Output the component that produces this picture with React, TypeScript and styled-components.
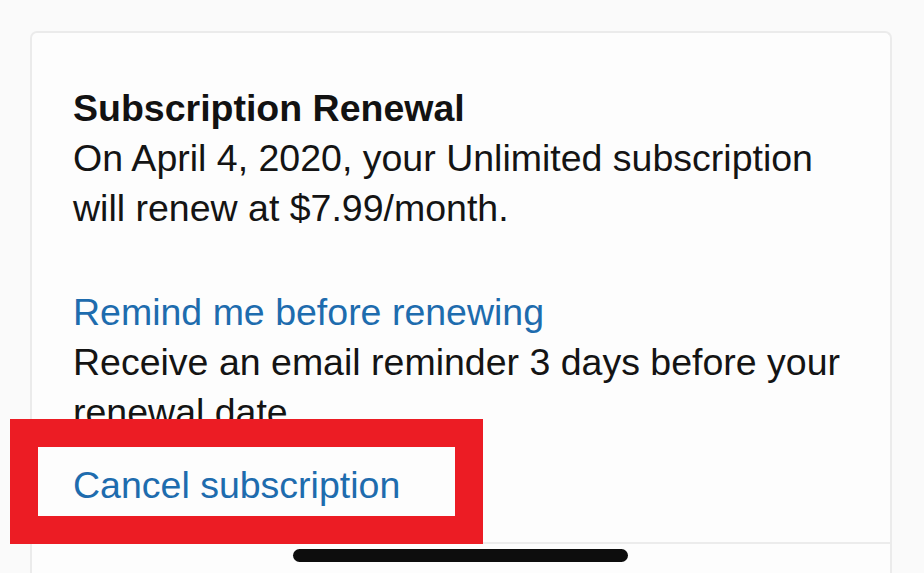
import * as React from 'react'
import styled, {createGlobalStyle} from 'styled-components'

const GlobalStyle = createGlobalStyle`
  html, body {
    margin: 0;
    padding: 0;
    background: #fafafa;
    overflow: hidden;
  }
  body {
    font-family: "Liberation Sans", Arial, Helvetica, sans-serif;
    color: #121212;
  }
`

const Page = styled.div`
  height: 573px;
  padding: 31px 32px 0 30px;
  box-sizing: border-box;
  overflow: hidden;
`

const Card = styled.div`
  background: #fdfdfd;
  border: 2px solid #ebebeb;
  border-bottom: none;
  border-radius: 7px 7px 0 0;
  height: 560px;
  box-sizing: border-box;
`

const Section = styled.div<{$top?: number; $bottom?: number}>`
  padding: ${p => p.$top ?? 0}px 38px ${p => p.$bottom ?? 0}px 41px;
  font-size: 37.5px;
  line-height: 50px;
  position: relative;
`

const Title = styled.div`
  font-weight: bold;
`

const Text = styled.div`
  color: #141414;
`

const Link = styled.a`
  display: block;
  color: #1e6cae;
  text-decoration: none;
`

const Divider = styled.div`
  border-top: 2px solid #ececec;
`

const Highlight = styled.div`
  position: absolute;
  left: -22px;
  top: -41px;
  width: 473px;
  height: 125px;
  box-sizing: border-box;
  border: 28px solid #ec1c24;
  background: transparent;
  pointer-events: none;
`

const HomeIndicator = styled.div`
  position: absolute;
  left: 293px;
  top: 549px;
  width: 335px;
  height: 13px;
  border-radius: 7px;
  background: #0d0d0d;
`

export default function App() {
  return (
    <React.Fragment>
      <GlobalStyle/>
      <Page>
        <Card>
          <Section $top={50} $bottom={54}>
            <Title>Subscription Renewal</Title>
            <Text>On April 4, 2020, your Unlimited subscription will renew at $7.99/month.</Text>
          </Section>
          <Section $bottom={23}>
            <Link href="#">Remind me before renewing</Link>
            <Text>Receive an email reminder 3 days before your renewal date.</Text>
          </Section>
          <Section $bottom={32}>
            <Link href="#">Cancel subscription</Link>
            <Highlight/>
          </Section>
          <Divider/>
        </Card>
      </Page>
      <HomeIndicator/>
    </React.Fragment>
  )
}
